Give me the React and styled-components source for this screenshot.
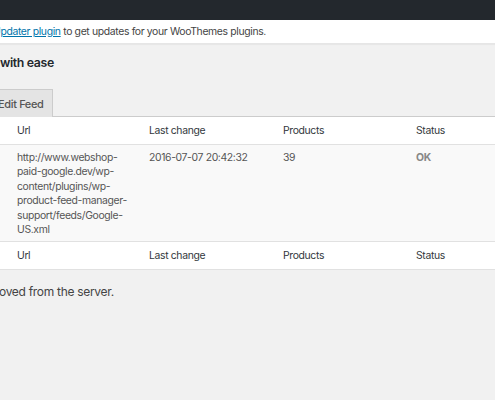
import styled, { createGlobalStyle } from "styled-components";

const GlobalStyle = createGlobalStyle`
  html, body {
    margin: 0;
    padding: 0;
    background: #f1f1f1;
    overflow: hidden;
  }
  body {
    font-family: Inter, "Noto Sans", sans-serif;
    font-size: 10.4px;
    letter-spacing: -0.35px;
    color: #444;
  }
`;

const columns = "132px 134px 133px 1fr";

const feeds = [
  {
    id: 1,
    url: "http://www.webshop-paid-google.dev/wp-content/plugins/wp-product-feed-manager-support/feeds/Google-US.xml",
    changed: "2016-07-07 20:42:32",
    products: 39,
    status: "OK",
  },
];

const Page = styled.div`
  width: 495px;
  height: 400px;
  overflow: hidden;
`;

const TopBar = styled.div`
  height: 20px;
  background: #23282d;
`;

const Notice = styled.div`
  height: 23px;
  display: flex;
  align-items: center;
  background: #fff;
  border-bottom: 1px solid #e6e6e6;
  box-shadow: 0 1px 1px rgba(0, 0, 0, 0.04);
`;

const NoticeText = styled.p`
  margin: 0 0 0 -7px;
  line-height: 14px;
  white-space: nowrap;
`;

const Link = styled.a`
  color: #0073aa;
  text-decoration: underline;
`;

const Heading = styled.h1`
  margin: 10px 0 0 0;
  font-size: 12.3px;
  font-weight: 600;
  letter-spacing: -0.35px;
  line-height: 18px;
  color: #23282d;
`;

const TabBar = styled.div`
  margin-top: 17px;
  display: flex;
  border-bottom: 1px solid #ccc;
`;

const Tab = styled.span`
  margin-left: -14px;
  margin-bottom: -1px;
  padding: 0 8px 0 11px;
  height: 27px;
  display: flex;
  align-items: center;
  background: #e4e4e4;
  border: 1px solid #ccc;
  border-bottom: none;
  font-size: 11px;
  font-weight: 500;
  color: #555;
`;

const Table = styled.div`
  background: #fff;
  border-bottom: 1px solid #e1e1e1;
`;

const Row = styled.div`
  display: grid;
  grid-template-columns: ${columns};
  padding: 6px 0 4px 17px;
  line-height: 14.4px;
  background: ${({ $striped }) => ($striped ? "#f9f9f9" : "#fff")};
  color: ${({ $head }) => ($head ? "#32373c" : "#555")};
  border-top: ${({ $border }) => ($border ? "1px solid #e1e1e1" : "none")};
`;

const HeadRow = styled(Row)`
  height: 14px;
  padding-top: 7px;
  padding-bottom: 6px;
`;

const UrlCell = styled.div`
  max-width: 112px;
`;

const Cell = styled.div``;

const Status = styled.div`
  font-weight: 700;
  color: #888;
`;

const Note = styled.p`
  margin: 14px 0 0 -1px;
  font-size: 12px;
  letter-spacing: -0.3px;
  line-height: 16px;
`;

const Header = ({ border }) => (
  <HeadRow $head $border={border}>
    <Cell>Url</Cell>
    <Cell>Last change</Cell>
    <Cell>Products</Cell>
    <Cell>Status</Cell>
  </HeadRow>
);

export default function App() {
  return (
    <Page>
      <GlobalStyle />
      <TopBar />
      <Notice>
        <NoticeText>
          <Link href="#">Updater plugin</Link> to get updates for your WooThemes plugins.
        </NoticeText>
      </Notice>
      <Heading>with ease</Heading>
      <TabBar>
        <Tab>Edit Feed</Tab>
      </TabBar>
      <Table>
        <Header />
        {feeds.map((feed) => (
          <Row key={feed.id} $striped $border>
            <UrlCell>{feed.url}</UrlCell>
            <Cell>{feed.changed}</Cell>
            <Cell>{feed.products}</Cell>
            <Status>{feed.status}</Status>
          </Row>
        ))}
        <Header border />
      </Table>
      <Note>oved from the server.</Note>
    </Page>
  );
}
